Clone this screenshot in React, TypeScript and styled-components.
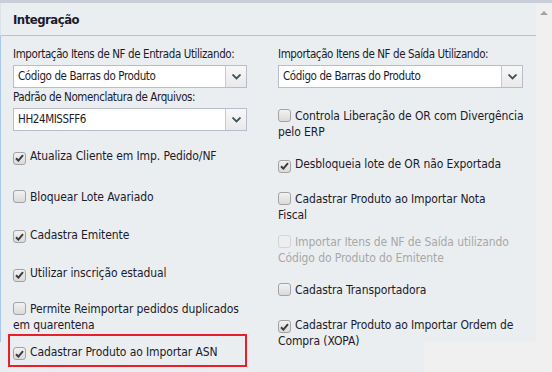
import styled, { createGlobalStyle } from "styled-components";

const GlobalStyle = createGlobalStyle`
  html, body {
    margin: 0;
    padding: 0;
    background: #f0f0f0;
  }
  body {
    font-family: "DejaVu Sans Condensed", "DejaVu Sans", sans-serif;
    font-size: 12px;
    color: #1b1b2b;
  }
`;

type Item = {
  text: string[];
  checked?: boolean;
  disabled?: boolean;
  top: number;
};

const leftChecks: Item[] = [
  { text: ["Atualiza Cliente em Imp. Pedido/NF"], checked: true, top: 16 },
  { text: ["Bloquear Lote Avariado"], top: 24 },
  { text: ["Cadastra Emitente"], checked: true, top: 22 },
  { text: ["Utilizar inscrição estadual"], checked: true, top: 22 },
  { text: ["Permite Reimportar pedidos duplicados", "em quarentena"], top: 19 },
];

const rightChecks: Item[] = [
  { text: ["Controla Liberação de OR com Divergência", "pelo ERP"], top: 19 },
  { text: ["Desbloqueia lote de OR não Exportada"], checked: true, top: 16 },
  { text: ["Cadastrar Produto ao Importar Nota", "Fiscal"], top: 18 },
  {
    text: ["Importar Itens de NF de Saída utilizando", "Código do Produto do Emitente"],
    disabled: true,
    top: 11,
  },
  { text: ["Cadastra Transportadora"], top: 16 },
  { text: ["Cadastrar Produto ao Importar Ordem de", "Compra (XOPA)"], checked: true, top: 19 },
];

export default function App() {
  return (
    <>
      <GlobalStyle />
      <Page>
        <Main>
          <Panel>
            <Header>Integração</Header>
            <Body>
              <Column>
                <FieldLabel>Importação Itens de NF de Entrada Utilizando:</FieldLabel>
                <Select value="Código de Barras do Produto" width={234} />
                <FieldLabel>Padrão de Nomenclatura de Arquivos:</FieldLabel>
                <Select value="HH24MISSFF6" width={234} />
                {leftChecks.map((item) => (
                  <Check key={item.text[0]} item={item} />
                ))}
                <Highlight>
                  <Check
                    item={{ text: ["Cadastrar Produto ao Importar ASN"], checked: true, top: 0 }}
                  />
                </Highlight>
              </Column>
              <Column>
                <FieldLabel>Importação Itens de NF de Saída Utilizando:</FieldLabel>
                <Select value="Código de Barras do Produto" width={245} />
                {rightChecks.map((item) => (
                  <Check key={item.text[0]} item={item} />
                ))}
              </Column>
            </Body>
          </Panel>
          <Overflow />
        </Main>
        <Scrollbar>
          <UpArrow />
        </Scrollbar>
      </Page>
    </>
  );
}

function Select({ value, width }: { value: string; width: number }) {
  return (
    <SelectBox style={{ width }}>
      <SelectValue>{value}</SelectValue>
      <SelectButton>
        <svg width="9" height="6" viewBox="0 0 9 6">
          <path d="M0.5 0.5 L4.5 4.5 L8.5 0.5" fill="none" stroke="#3f5257" strokeWidth="1.8" />
        </svg>
      </SelectButton>
    </SelectBox>
  );
}

function Check({ item }: { item: Item }) {
  return (
    <CheckRow $top={item.top} $disabled={item.disabled}>
      <Box $disabled={item.disabled}>
        {item.checked && (
          <svg width="9" height="8" viewBox="0 0 9 8">
            <path d="M1 4.2 L3.4 6.6 L8 1.2" fill="none" stroke="#3c3c3c" strokeWidth="2" />
          </svg>
        )}
      </Box>
      {item.text.map((line, i) => (
        <span key={line}>
          {i > 0 && <br />}
          {line}
        </span>
      ))}
    </CheckRow>
  );
}

const Page = styled.div`
  display: flex;
  width: 552px;
  height: 372px;
  overflow: hidden;
  border-top: 3px solid #c9ced8;
  box-sizing: border-box;
`;

const Main = styled.div`
  width: 536px;
`;

const Panel = styled.div`
  position: relative;
  z-index: 1;
  background: #ebeef0;
  height: 339px;
`;

const Overflow = styled.div`
  width: 424px;
  height: 40px;
  background: #ebeef0;
`;

const Header = styled.div`
  height: 33px;
  box-sizing: border-box;
  padding: 9px 0 0 12px;
  font-weight: bold;
  font-size: 13px;
  letter-spacing: -0.5px;
  border-bottom: 1px solid #a7c6ec;
  border-left: 1px solid #dde3ea;
`;

const Body = styled.div`
  display: grid;
  grid-template-columns: 265px 1fr;
  padding: 10px 0 0 12px;
  border-left: 1px solid #a7c6ec;
  height: 306px;
  box-sizing: border-box;
`;

const Column = styled.div`
  display: flex;
  flex-direction: column;
  align-items: flex-start;
`;

const FieldLabel = styled.div`
  font-size: 11.5px;
  letter-spacing: -0.4px;
  line-height: 16px;
  margin-bottom: 3px;
  white-space: nowrap;
`;

const SelectBox = styled.div`
  display: flex;
  height: 23px;
  box-sizing: border-box;
  border: 1px solid #b9bccb;
  background: #fff;
  margin-bottom: 1px;
`;

const SelectValue = styled.div`
  flex: 1;
  padding: 2px 0 0 4px;
  font-size: 11.5px;
  letter-spacing: -0.4px;
  line-height: 17px;
  white-space: nowrap;
`;

const SelectButton = styled.div`
  width: 20px;
  border-left: 1px solid #c6c9d4;
  background: linear-gradient(#f8f8f8, #e9e9ec);
  display: flex;
  align-items: center;
  justify-content: center;
`;

const CheckRow = styled.div<{ $top: number; $disabled?: boolean }>`
  margin-top: ${(p) => p.$top}px;
  line-height: 16px;
  white-space: nowrap;
  letter-spacing: -0.1px;
  color: ${(p) => (p.$disabled ? "#a8a8a8" : "inherit")};
`;

const Box = styled.span<{ $disabled?: boolean }>`
  display: inline-flex;
  align-items: center;
  justify-content: center;
  width: 13px;
  height: 13px;
  box-sizing: border-box;
  margin-right: 4px;
  vertical-align: -2px;
  border: 1px solid ${(p) => (p.$disabled ? "#d4d4d4" : "#a3a3a3")};
  border-radius: 3px;
  background: ${(p) =>
    p.$disabled ? "#eeeeee" : "linear-gradient(#f2f2f2, #dadada)"};
`;

const Highlight = styled.div`
  margin: 1px 0 0 -5px;
  padding: 8px 20px 5px 3px;
  border: 2px solid #e8202a;
  width: 239px;
  box-sizing: border-box;
`;

const Scrollbar = styled.div`
  width: 16px;
  background: #f0f0f0;
  display: flex;
  justify-content: center;
  padding-top: 8px;
  box-sizing: border-box;
`;

const UpArrow = styled.div`
  width: 0;
  height: 0;
  border-left: 4px solid transparent;
  border-right: 4px solid transparent;
  border-bottom: 4px solid #a3a3a3;
`;
